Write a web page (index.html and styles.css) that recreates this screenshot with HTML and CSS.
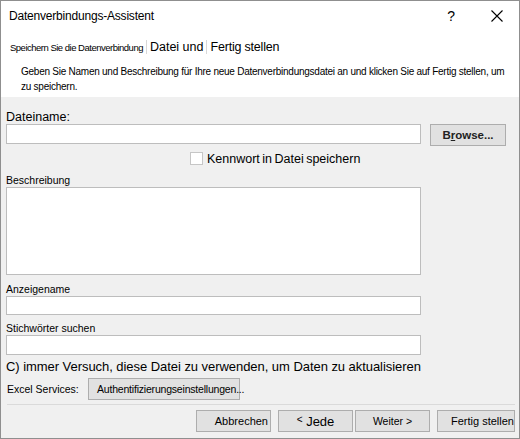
FILE: index.html
```html
<!DOCTYPE html>
<html lang="de">
<head>
    <meta charset="UTF-8">
    <title>Datenverbindungs-Assistent</title>
    <link rel="stylesheet" href="styles.css">
</head>
<body>

    <div class="dialog">
        <!-- Title bar -->
        <div class="titlebar">
            <span class="title">Datenverbindungs-Assistent</span>
            <div class="title-buttons">
                <span class="help">?</span>
                <svg class="close" width="12" height="12" viewBox="0 0 12 12">
                    <path d="M0.5 0.5 L11.5 11.5 M11.5 0.5 L0.5 11.5" stroke="#000" stroke-width="1.1" fill="none"/>
                </svg>
            </div>
        </div>

        <!-- Step header -->
        <div class="header">
            <div class="steps">
                <span class="step-small">Speichern Sie die Datenverbindung</span>
                <span class="step-sep"></span>
                <span class="step-mid">Datei und</span>
                <span class="step-sep"></span>
                <span class="step-big">Fertig stellen</span>
            </div>
            <p class="hint">Geben Sie Namen und Beschreibung für Ihre neue Datenverbindungsdatei an und klicken Sie auf Fertig stellen, um zu speichern.</p>
        </div>

        <!-- Form -->
        <div class="content">
            <label class="label-big" for="file-name">Dateiname:</label>
            <div class="file-row">
                <input type="text" id="file-name" class="field file-field">
                <button class="btn browse-btn"><b>B<u>r</u>owse...</b></button>
            </div>

            <div class="check-row">
                <span class="checkbox"></span>
                <span>Kennwort in Datei speichern</span>
            </div>

            <label class="label" for="description">Beschreibung</label>
            <textarea id="description" class="field area"></textarea>

            <label class="label label-gap" for="display-name">Anzeigename</label>
            <input type="text" id="display-name" class="field short">

            <label class="label label-gap2" for="keywords">Stichwörter suchen</label>
            <input type="text" id="keywords" class="field">

            <div class="refresh">C) immer Versuch, diese Datei zu verwenden, um Daten zu aktualisieren</div>

            <div class="services-row">
                <span class="services-label">Excel Services:</span>
                <button class="btn auth-btn">Authentifizierungseinstellungen...</button>
            </div>
        </div>

        <!-- Buttons -->
        <div class="footer">
            <button class="btn footer-btn cancel-btn">Abbrechen</button>
            <button class="btn footer-btn back-btn"><small>&lt;</small> Jede</button>
            <button class="btn footer-btn next-btn">Weiter &gt;</button>
            <button class="btn footer-btn finish-btn">Fertig stellen</button>
        </div>
    </div>

</body>
</html>
```

FILE: styles.css
```css
body {
    margin: 0;
    font-family: "Liberation Sans", Arial, sans-serif;
    color: #000;
}

.dialog {
    width: 520px;
    height: 439px;
    box-sizing: border-box;
    border: 1px solid #8f8f8f;
    background-color: #f0f0f0;
    display: flex;
    flex-direction: column;
}

.titlebar {
    height: 29px;
    background-color: #fff;
    display: flex;
    justify-content: space-between;
    align-items: center;
    padding: 0 16px 0 8px;
}

.title {
    font-size: 12px;
    letter-spacing: -0.2px;
}

.title-buttons {
    display: flex;
    align-items: center;
}

.help {
    font-size: 14px;
    margin-right: 36px;
}

.header {
    height: 67px;
    background-color: #fff;
    padding: 0 9px;
}

.steps {
    display: flex;
    align-items: center;
    height: 34px;
}

.step-small {
    font-size: 9.5px;
    letter-spacing: -0.5px;
}

.step-mid {
    font-size: 12.5px;
}

.step-big {
    font-size: 12.5px;
    letter-spacing: -0.2px;
}

.step-sep {
    width: 1px;
    height: 14px;
    background-color: #d8d8d8;
    margin: 0 3px;
}

.hint {
    margin: 0 0 0 11px;
    font-size: 10px;
    line-height: 15px;
    letter-spacing: -0.25px;
    width: 485px;
}

.content {
    padding: 13px 0 0 5px;
}

.label-big {
    display: block;
    font-size: 12.5px;
    line-height: 14px;
}

.label {
    display: block;
    font-size: 10.5px;
    line-height: 14px;
}

.field {
    display: block;
    box-sizing: border-box;
    width: 415px;
    height: 20px;
    margin: 0;
    border: 1px solid #bdbdbd;
    background-color: #fff;
    font-family: inherit;
}

.file-row {
    display: flex;
    align-items: flex-start;
}

.btn {
    box-sizing: border-box;
    border: 1px solid #adadad;
    background-color: #e1e1e1;
    font-family: inherit;
    color: #000;
    padding: 0;
}

.browse-btn {
    width: 76px;
    height: 22px;
    margin-left: 9px;
    font-size: 11.5px;
    color: #222;
}

.check-row {
    display: flex;
    align-items: center;
    height: 13px;
    margin: 6px 0 0 184px;
    font-size: 12.5px;
}

.checkbox {
    width: 13px;
    height: 13px;
    box-sizing: border-box;
    border: 1px solid #c6c6c6;
    background-color: #fff;
    margin-right: 4px;
}

.check-row .checkbox + span {
    word-spacing: -1px;
}

.check-row + .label {
    margin-top: 8px;
}

.area {
    height: 88px;
    resize: none;
}

.label-gap {
    margin-top: 7px;
}

.short {
    height: 19px;
}

.label-gap2 {
    margin-top: 6px;
}

.refresh {
    margin-top: 4px;
    font-size: 13px;
    line-height: 16px;
    letter-spacing: -0.05px;
}

.services-row {
    display: flex;
    align-items: center;
    margin-top: 3px;
    height: 22px;
    font-size: 10.5px;
}

.services-label {
    margin-left: 1px;
    width: 81px;
}

.auth-btn {
    width: 152px;
    height: 22px;
    font-size: 10.5px;
    text-align: left;
    padding-left: 8px;
    white-space: nowrap;
    letter-spacing: -0.2px;
}

.footer {
    margin: 4px 4px 0 6px;
    border-top: 1px solid #dadada;
    padding-top: 5px;
    display: flex;
    justify-content: flex-end;
}

.footer-btn {
    width: 75px;
    height: 22px;
    font-size: 11px;
    white-space: nowrap;
}

.cancel-btn {
    text-align: right;
    padding-right: 2px;
}

.back-btn {
    margin-left: 7px;
    font-size: 13px;
}

.back-btn small {
    font-size: 10px;
    vertical-align: 3px;
}

.next-btn {
    margin-left: 2px;
    font-size: 10.5px;
}

.finish-btn {
    width: 78px;
    margin-left: 7px;
    text-align: right;
    padding-right: 0;
}
```
